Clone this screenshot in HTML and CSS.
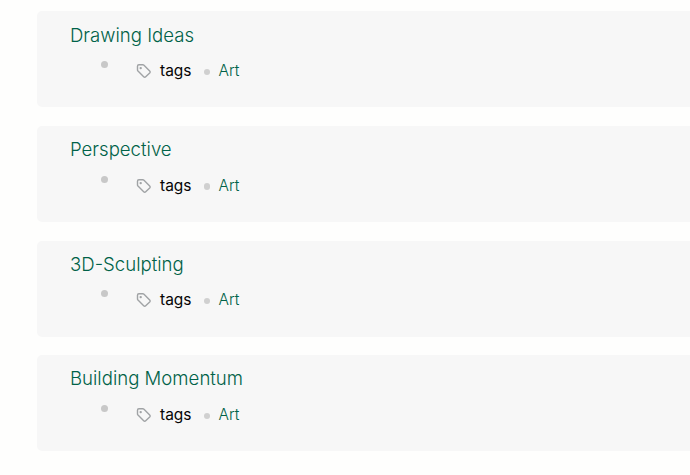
FILE: index.html
```
<!DOCTYPE html>
<html lang="en">
<head>
    <meta charset="UTF-8">
    <meta name="viewport" content="width=device-width, initial-scale=1.0">
    <title>Art Notes</title>
    <link rel="stylesheet" href="styles.css">
</head>
<body>
    <!-- Tag icon, shared by all the cards -->
    <svg class="icon-defs" width="0" height="0">
        <symbol id="tag-icon" viewBox="0 0 16 16">
            <path d="M1.500 3.200v3.700c0 .5.2.9.5 1.200l5.700 5.700c.6.6 1.400.6 2 0l4-3.800c.6-.6.6-1.400 0-2L8 2.300c-.3-.3-.7-.5-1.200-.5H2.900c-.8 0-1.400.6-1.400 1.400z" fill="none" stroke="currentColor" stroke-width="1.400" stroke-linejoin="round"/>
            <circle cx="4.700" cy="5.100" r="1.200" fill="currentColor"/>
        </symbol>
    </svg>

    <!-- List of linked references -->
    <div class="reference-list">
        <div class="card">
            <a class="card-title">Drawing Ideas</a>
            <div class="card-block">
                <span class="bullet"></span>
                <svg class="tag-icon"><use href="#tag-icon"/></svg>
                <span class="property">tags</span>
                <span class="separator"></span>
                <a class="tag">Art</a>
            </div>
        </div>
        <div class="card">
            <a class="card-title">Perspective</a>
            <div class="card-block">
                <span class="bullet"></span>
                <svg class="tag-icon"><use href="#tag-icon"/></svg>
                <span class="property">tags</span>
                <span class="separator"></span>
                <a class="tag">Art</a>
            </div>
        </div>
        <div class="card">
            <a class="card-title">3D-Sculpting</a>
            <div class="card-block">
                <span class="bullet"></span>
                <svg class="tag-icon"><use href="#tag-icon"/></svg>
                <span class="property">tags</span>
                <span class="separator"></span>
                <a class="tag">Art</a>
            </div>
        </div>
        <div class="card">
            <a class="card-title">Building Momentum</a>
            <div class="card-block">
                <span class="bullet"></span>
                <svg class="tag-icon"><use href="#tag-icon"/></svg>
                <span class="property">tags</span>
                <span class="separator"></span>
                <a class="tag">Art</a>
            </div>
        </div>
    </div>
</body>
</html>
```

FILE: styles.css
```
/* Styles for the entire page */
body {
    margin: 0;
    background-color: #fefefd;
    font-family: Inter, sans-serif;
    color: #050505;
    overflow: hidden;
}

.icon-defs {
    display: none;
}

/* Column of cards, running off the right edge */
.reference-list {
    display: flex;
    flex-direction: column;
    gap: 18.56px;
    padding: 11.45px 0 0 37px;
}

.card {
    box-sizing: border-box;
    height: 96px;
    padding: 10.1px 0 0 33px;
    background-color: #f7f7f7;
    border-radius: 5px 0 0 5px;
}

.card-title {
    display: block;
    font-size: 18.6px;
    font-weight: 300;
    line-height: 26px;
    color: #006248;
}

/* Bullet, icon, property name and its value */
.card-block {
    display: flex;
    align-items: center;
    height: 24px;
    margin-top: 11.6px;
    padding-left: 31px;
    font-size: 15.5px;
    line-height: 24px;
}

.bullet {
    width: 7px;
    height: 7px;
    margin-bottom: 13px;
    border-radius: 50%;
    background-color: #c8c8c8;
}

.tag-icon {
    width: 16px;
    height: 16px;
    margin: 0 8.5px 0 27.5px;
    color: #a0a3a5;
}

.separator {
    width: 6.5px;
    height: 6.5px;
    margin: 2px 8.5px 0 12px;
    border-radius: 50%;
    background-color: #d0d0d0;
}

.tag {
    font-weight: 300;
    color: #006248;
}
```
